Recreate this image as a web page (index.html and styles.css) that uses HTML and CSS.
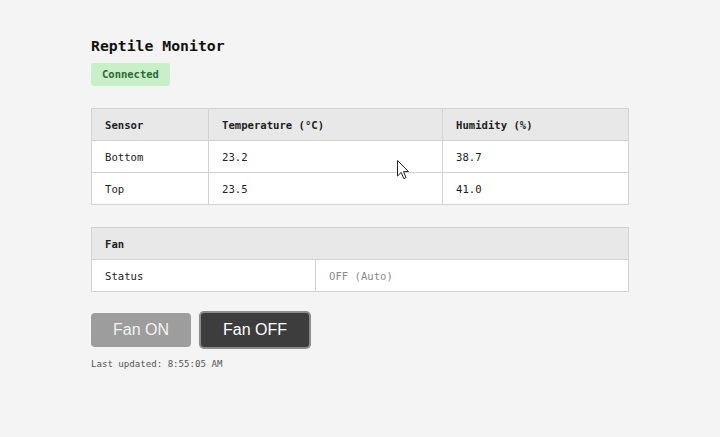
FILE: index.html
```html
<!DOCTYPE html>
<html>
<head>
<meta charset="utf-8">
<link rel="stylesheet" href="styles.css">
</head>
<body>
<div class="page">
  <h1 class="title">Reptile Monitor</h1>
  <div class="badge">Connected</div>

  <table class="grid sensors">
    <colgroup><col class="c1"><col class="c2"><col class="c3"></colgroup>
    <thead>
      <tr><th>Sensor</th><th>Temperature (°C)</th><th>Humidity (%)</th></tr>
    </thead>
    <tbody>
      <tr><td>Bottom</td><td>23.2</td><td>38.7</td></tr>
      <tr><td>Top</td><td>23.5</td><td>41.0</td></tr>
    </tbody>
  </table>

  <table class="grid fan">
    <colgroup><col class="f1"><col class="f2"></colgroup>
    <thead>
      <tr><th colspan="2">Fan</th></tr>
    </thead>
    <tbody>
      <tr><td>Status</td><td class="muted">OFF (Auto)</td></tr>
    </tbody>
  </table>

  <div class="actions">
    <button class="btn btn-on">Fan ON</button>
    <button class="btn btn-off">Fan OFF</button>
  </div>
  <div class="updated">Last updated: 8:55:05 AM</div>
</div>
<svg class="cursor" width="13" height="20" viewBox="0 0 13 20">
  <path d="M0.5 0.5 L0.5 16 L4.2 12.4 L6.8 18.6 L9 17.6 L6.5 11.6 L11.5 11.6 Z" fill="#fff" stroke="#222" stroke-width="1" stroke-linejoin="round"/>
</svg>
</body>
</html>
```
FILE: styles.css
```css
html, body {
  margin: 0;
  padding: 0;
  background: #f4f4f4;
}
body {
  font-family: "DejaVu Sans Mono", "Liberation Mono", monospace;
  color: #222;
  position: relative;
  min-height: 437px;
}
.page {
  width: 538px;
  margin: 0 auto;
  padding-top: 36px;
}
.title {
  margin: 0;
  font-size: 14.8px;
  line-height: 20px;
  font-weight: bold;
  color: #111;
}
.badge {
  display: inline-block;
  margin-top: 7px;
  padding: 5px 11px;
  font-size: 10.5px;
  line-height: 13px;
  font-weight: bold;
  color: #2d6b33;
  background: #c9efc9;
  border-radius: 3px;
}
.grid {
  width: 537px;
  border-collapse: collapse;
  table-layout: fixed;
  background: #fff;
  margin-top: 22px;
  font-size: 10.6px;
}
.grid th, .grid td {
  border: 1px solid #d2d2d2;
  height: 31px;
  padding: 0 13px;
  text-align: left;
  line-height: 14px;
}
.grid th {
  background: #e8e8e8;
  font-weight: bold;
  color: #1e1e1e;
}
.grid td {
  color: #222;
}
.grid td.muted {
  color: #8a8a8a;
}
.c1 { width: 117px; }
.c2 { width: 234px; }
.c3 { width: 186px; }
.f1 { width: 224px; }
.f2 { width: 313px; }
.actions {
  display: flex;
  align-items: center;
  gap: 8px;
  margin-top: 19px;
}
.btn {
  font-family: "Liberation Sans", Arial, sans-serif;
  font-size: 16px;
  line-height: 18px;
  padding: 8px 22px;
  border: none;
  border-radius: 4px;
  color: #fff;
}
.btn-on {
  background: #9d9d9d;
  color: #f2f2f2;
}
.btn-off {
  background: #3d3d3d;
  border: 2px solid #8c8c8c;
  border-radius: 5px;
}
.updated {
  margin-top: 9px;
  font-size: 9.1px;
  line-height: 12px;
  color: #555;
}
.cursor {
  position: absolute;
  left: 397px;
  top: 160px;
}
```
